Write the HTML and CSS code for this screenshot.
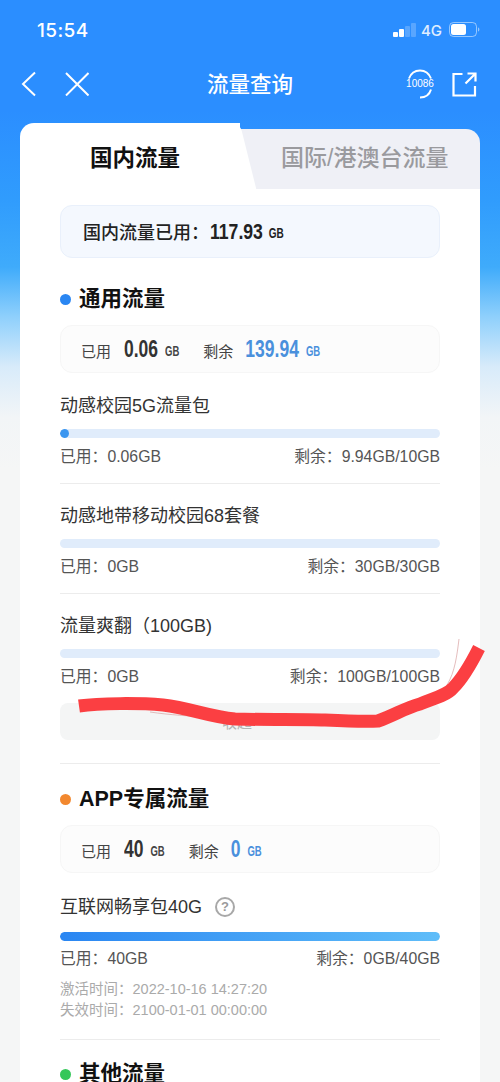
FILE: index.html
```html
<!DOCTYPE html>
<html lang="zh">
<head>
<meta charset="utf-8">
<title>流量查询</title>
<link rel="stylesheet" href="styles.css">
</head>
<body>
<div class="page">
  <div class="status">
    <span class="time">15:54</span>
    <div class="status-right">
      <svg class="signal" width="23" height="15" viewBox="0 0 23 15"><rect x="0" y="9" width="5" height="5" rx="1" fill="#fff"/><rect x="6" y="6" width="5" height="8" rx="1" fill="#fff"/><rect x="12" y="3" width="5" height="11" rx="1" fill="#fff" opacity=".22"/><rect x="18" y="0" width="5" height="14" rx="1" fill="#fff" opacity=".22"/></svg>
      <span class="net">4G</span>
      <svg class="battery" width="31" height="16" viewBox="0 0 31 16"><rect x=".5" y=".5" width="27" height="14" rx="4" fill="none" stroke="#fff" stroke-opacity=".5"/><rect x="2" y="2" width="15" height="11" rx="2.5" fill="#fff"/><path d="M29 5.500c1 .4 1.400 1.200 1.400 2s-.4 1.600-1.400 2z" fill="#fff" opacity=".5"/></svg>
    </div>
  </div>
  <div class="nav">
    <div class="nav-left">
      <svg width="15" height="26" viewBox="0 0 15 26"><path d="M14 1.500 2 13 14 24.500" fill="none" stroke="#fff" stroke-width="2"/></svg>
      <svg width="24" height="24" viewBox="0 0 24 24"><path d="M1 1 23.500 23.500M23.500 1 1 23.500" fill="none" stroke="#fff" stroke-width="2"/></svg>
    </div>
    <div class="nav-title">流量查询</div>
    <div class="nav-right">
      <div class="hotline">
        <svg width="28" height="30" viewBox="0 0 28 30"><path d="M3 9.500C5 4 9 1.500 14 1.500S23 4.500 25 9.500M25 20.500C23.500 25.500 19.500 28.500 14 28.500" fill="none" stroke="#fff" stroke-width="2"/></svg>
        <span class="hotline-num">10086</span>
      </div>
      <svg width="25" height="25" viewBox="0 0 25 25"><path d="M10.500 2H1.500V23.500H23V14M13.500 11.500 23.500 1.500M15.500 1.500H23.500V9.500" fill="none" stroke="#fff" stroke-width="2.200"/></svg>
    </div>
  </div>

  <div class="card">
    <div class="tabs">
      <div class="tab tab-on">国内流量</div>
      <div class="tab tab-off">国际/港澳台流量</div>
    </div>
    <div class="body">
      <div class="total"><span class="total-label">国内流量已用：</span><span class="num big">117.93</span><span class="unit big-unit">GB</span></div>

      <h2 class="head"><i class="dot dot-blue"></i>通用流量</h2>
      <div class="stat">
        <span class="stat-label">已用</span><span class="num">0.06</span><span class="unit">GB</span>
        <span class="stat-label second">剩余</span><span class="num blue">139.94</span><span class="unit blue">GB</span>
      </div>

      <div class="item">
        <div class="name">动感校园5G流量包</div>
        <div class="bar"><div class="fill fill-dot"></div></div>
        <div class="row"><span>已用：0.06GB</span><span>剩余：9.94GB/10GB</span></div>
      </div>
      <div class="item">
        <div class="name">动感地带移动校园68套餐</div>
        <div class="bar"></div>
        <div class="row"><span>已用：0GB</span><span>剩余：30GB/30GB</span></div>
      </div>
      <div class="item item-last">
        <div class="name">流量爽翻（100GB)</div>
        <div class="bar"></div>
        <div class="row"><span>已用：0GB</span><span>剩余：100GB/100GB</span></div>
      </div>
      <div class="collapse">收起<svg width="16" height="8" viewBox="0 0 16 8"><path d="M1 7 8 1l7 6" fill="none" stroke="#c4c4c4" stroke-width="1.200"/></svg></div>
      <hr class="rule">

      <h2 class="head head-app"><i class="dot dot-orange"></i>APP专属流量</h2>
      <div class="stat">
        <span class="stat-label">已用</span><span class="num">40</span><span class="unit">GB</span>
        <span class="stat-label second">剩余</span><span class="num blue">0</span><span class="unit blue">GB</span>
      </div>
      <div class="item item-app">
        <div class="name name-app">互联网畅享包40G<span class="help">?</span></div>
        <div class="bar"><div class="fill fill-full"></div></div>
        <div class="row"><span>已用：40GB</span><span>剩余：0GB/40GB</span></div>
        <div class="meta">激活时间：2022-10-16 14:27:20</div>
        <div class="meta">失效时间：2100-01-01 00:00:00</div>
      </div>
      <h2 class="head head-other"><i class="dot dot-green"></i>其他流量</h2>
    </div>
  </div>
</div>
<svg class="scribble" width="500" height="1082" viewBox="0 0 500 1082">
  <path d="M459 639C457 655 455 672 447 685M150 712C170 715 190 716 205 717" fill="none" stroke="#d9a0a0" stroke-width=".7"/>
  <path d="M79 706C100 703 140 703 163 705C190 708 210 717 235 719C270 720 300 719 325 720C345 721 365 722 378 721C395 715 405 708 420 704C435 698 447 695 453 688C463 678 473 660 479 648" fill="none" stroke="#fb3f42" stroke-width="13" stroke-linejoin="round"/>
</svg>
</body>
</html>
```
FILE: styles.css
```css
* { box-sizing: border-box; }
html, body { margin: 0; padding: 0; }
body {
  width: 500px;
  height: 1082px;
  overflow: hidden;
  position: relative;
  font-family: "Liberation Sans", "Noto Sans CJK SC", sans-serif;
  background: linear-gradient(180deg, #2b8eff 0, #2b8eff 110px, #309cfd 200px, #3fabfb 267px, #8fd0fc 317px, #d8ebfa 367px, #f2f5f7 417px, #f5f6f6 470px);
  color: #222;
}
.page { height: 1082px; overflow: hidden; }
.status {
  height: 60px;
  display: flex;
  justify-content: space-between;
  align-items: center;
  padding: 0 20px 0 37px;
  color: #fff;
}
.time { font-size: 19px; font-weight: 500; letter-spacing: .4px; font-family: "Inter", "Liberation Sans", sans-serif; }
.status-right { display: flex; align-items: center; gap: 5px; }
.net { font-size: 15px; font-weight: 500; font-family: "Inter", sans-serif; opacity: .85; }
.battery { margin-left: 2px; }
.nav {
  height: 50px;
  display: flex;
  align-items: center;
  justify-content: space-between;
  padding: 0 23px 2px 21px;
  position: relative;
  color: #fff;
}
.nav-left { display: flex; align-items: center; gap: 29px; }
.nav-title { font-size: 21.500px; font-weight: 500; position: absolute; left: 207px; top: 10px; line-height: 30px; }
.nav-right { display: flex; align-items: center; gap: 18px; }
.hotline { position: relative; width: 28px; height: 30px; }
.hotline svg { display: block; }
.hotline-num {
  position: absolute;
  left: -1px;
  top: 8px;
  width: 30px;
  text-align: center;
  font-size: 10px;
  line-height: 14px;
}
.card {
  margin: 13px 20px 0;
  height: 1100px;
  position: relative;
}
.tabs { display: flex; height: 66px; position: relative; }
.tab { display: flex; align-items: center; }
.tab-on {
  width: 220px;
  padding-left: 70px;
  font-size: 22.500px;
  font-weight: 700;
  color: #111;
  background: #fff;
  border-radius: 14px 0 0 0;
  position: relative;
  z-index: 1;
}
.tab-on::after {
  content: "";
  position: absolute;
  top: 0;
  bottom: 0;
  left: 196px;
  width: 32px;
  background: #fff;
  transform: skewX(14deg);
  border-radius: 0 8px 0 0;
}
.tab-off {
  flex: 1;
  margin-top: 6px;
  padding: 0 0 6px 41px;
  font-size: 23px;
  background: #eff0f6;
  color: #9a9a9e;
  font-weight: 500;
  border-radius: 0 14px 0 0;
}
.body { background: #fff; padding: 16px 40px 0; height: 1000px; }
.total {
  height: 53px;
  display: flex;
  align-items: baseline;
  padding: 12px 0 0 22px;
  background: #f4f8fe;
  border: 1px solid #e9f0fb;
  border-radius: 12px;
}
.total-label { font-size: 18px; font-weight: 500; color: #222; width: 127px; }
.num {
  display: inline-block;
  font-weight: 700;
  font-size: 17.500px;
  line-height: 22px;
  color: #333;
  transform: scaleY(1.35);
  transform-origin: 50% 78%;
}
.num.big { font-size: 17.600px; color: #222; transform: scaleY(1.26); }
.unit {
  display: inline-block;
  font-size: 9.500px;
  line-height: 14px;
  font-weight: 700;
  color: #444;
  margin-left: 7px;
  transform: scaleY(1.5);
  transform-origin: 50% 80%;
}
.big-unit { font-size: 10px; color: #222; margin-left: 6px; }
.num.blue, .unit.blue { color: #4a90dc; }
.head {
  margin: 26px 0 0;
  height: 30px;
  font-size: 21.500px;
  line-height: 30px;
  font-weight: 700;
  color: #111;
  display: flex;
  align-items: center;
}
.head-app { margin-top: 20px; }
.dot { width: 11px; height: 11px; border-radius: 50%; margin-right: 8px; flex: none; }
.dot-blue { background: #2a86f2; }
.dot-orange { background: #f2882f; }
.dot-green { background: #35c759; }
.stat {
  margin-top: 11px;
  height: 48px;
  display: flex;
  align-items: baseline;
  padding: 14px 0 0 20px;
  background: #fcfcfc;
  border: 1px solid #f6f6f6;
  border-radius: 12px;
}
.stat-label { font-size: 15px; color: #444; margin-right: 13px; }
.stat-label.second { margin-left: 24px; margin-right: 12px; }
.item { padding: 20px 0 0; border-bottom: 1px solid #ececec; height: 110px; }
.stat + .item { margin-top: 1px; }
.item-last { border-bottom: 0; height: 109px; }
.name { font-size: 18px; line-height: 24px; color: #333; }
.bar { margin-top: 11px; height: 9px; border-radius: 5px; background: #e0ecfb; overflow: hidden; }
.fill { height: 9px; border-radius: 5px; }
.fill-dot { width: 9px; background: #3b96f0; }
.fill-full { background: linear-gradient(90deg, #2a86f2, #5fbdf9); }
.row { display: flex; justify-content: space-between; margin-top: 9px; font-size: 15.800px; line-height: 20px; color: #555; }
.collapse {
  height: 37px;
  display: flex;
  align-items: center;
  justify-content: center;
  gap: 10px;
  font-size: 15px;
  color: #b5b5b5;
  background: #f4f5f5;
  border-radius: 8px;
}
.rule { margin: 23px 0 0; border: 0; border-top: 1px solid #ececec; }
.item-app { height: auto; margin-top: 0; padding: 21px 0 18px; }
.name-app { display: flex; align-items: center; }
.name-app + .bar { margin-top: 13px; }
.help {
  width: 20px;
  height: 20px;
  margin-left: 13px;
  border: 2px solid #a8a8a8;
  border-radius: 50%;
  color: #9a9a9a;
  font-size: 13px;
  font-weight: 700;
  line-height: 16px;
  text-align: center;
}
.meta { font-size: 14.500px; line-height: 21px; color: #aaa; }
.item-app .row { margin-top: 8px; margin-bottom: 10px; }
.head-other { margin-top: 19px; }
.scribble { position: absolute; left: 0; top: 0; pointer-events: none; }
```
